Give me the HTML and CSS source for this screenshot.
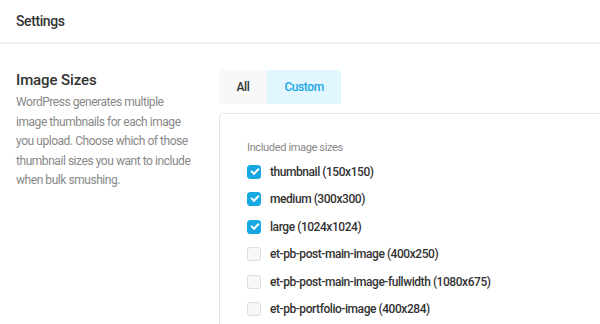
FILE: index.html
```html
<!DOCTYPE html>
<html lang="en">
<head>
    <meta charset="UTF-8">
    <meta name="viewport" content="width=device-width, initial-scale=1.0">
    <title>Settings</title>
    <link rel="stylesheet" href="styles.css">
</head>
<body>
    <header class="page-header">
        <h1>Settings</h1>
    </header>

    <section class="settings-row">
        <div class="settings-label">
            <h2>Image Sizes</h2>
            <p>WordPress generates multiple image thumbnails for each image you upload. Choose which of those thumbnail sizes you want to include when bulk smushing.</p>
        </div>
        <div class="settings-field">
            <div class="tabs">
                <span class="tab">All</span>
                <span class="tab active">Custom</span>
            </div>
            <div class="tab-content">
                <p class="field-label">Included image sizes</p>
                <ul class="size-list">
                    <li><span class="check checked"></span>thumbnail (150x150)</li>
                    <li><span class="check checked"></span>medium (300x300)</li>
                    <li><span class="check checked"></span>large (1024x1024)</li>
                    <li><span class="check"></span>et-pb-post-main-image (400x250)</li>
                    <li><span class="check"></span>et-pb-post-main-image-fullwidth (1080x675)</li>
                    <li><span class="check"></span>et-pb-portfolio-image (400x284)</li>
                </ul>
            </div>
        </div>
    </section>
</body>
</html>
```

FILE: styles.css
```css
/* Global */
body {
    font-family: Roboto, "Liberation Sans", sans-serif;
    margin: 0;
    background: #ffffff;
    color: #333333;
    overflow: hidden;
    height: 324px;
}

/* Header */
.page-header {
    height: 42px;
    padding: 0 16px;
    display: flex;
    align-items: center;
    border-bottom: 2px solid #eeeeee;
}

.page-header h1 {
    margin: 0;
    font-size: 14px;
    font-weight: 500;
    letter-spacing: -0.4px;
}

/* Settings row */
.settings-row {
    display: grid;
    grid-template-columns: 203px 1fr;
    padding: 26px 0 0 16px;
}

.settings-label h2 {
    margin: 0 0 3px;
    font-size: 15px;
    font-weight: 500;
    line-height: 20px;
    letter-spacing: -0.1px;
}

.settings-label p {
    margin: 0;
    width: 176px;
    font-size: 12px;
    line-height: 19.5px;
    letter-spacing: -0.45px;
    color: #888888;
}

/* Tabs */
.tabs {
    display: flex;
}

.tab {
    height: 34px;
    padding: 0 17.5px;
    display: flex;
    align-items: center;
    background: #f8f8f8;
    font-size: 12px;
    font-weight: 500;
    letter-spacing: -0.4px;
    color: #333333;
    border-radius: 4px 0 0 0;
}

.tab.active {
    background: #e1f6ff;
    color: #17a8e3;
    border-radius: 0 4px 0 0;
}

.tab-content {
    margin-top: 9px;
    margin-right: -20px;
    border: 1px solid #e6e6e6;
    border-radius: 4px 0 0 0;
    padding: 25px 0 0 27px;
    height: 300px;
}

.field-label {
    margin: 0 0 1px;
    font-size: 11px;
    line-height: 18px;
    letter-spacing: -0.35px;
    color: #888888;
}

.size-list {
    list-style: none;
    margin: 0;
    padding: 0;
}

.size-list li {
    height: 27.5px;
    display: flex;
    align-items: center;
    font-size: 12px;
    font-weight: 500;
    letter-spacing: -0.45px;
    color: #333333;
}

.check {
    width: 12px;
    height: 12px;
    margin-right: 9px;
    border: 1px solid #dddddd;
    border-radius: 3px;
    background: #f8f8f8;
    position: relative;
}

.check.checked {
    background: #17a8e3;
    border-color: #17a8e3;
}

.check.checked::after {
    content: "";
    position: absolute;
    left: 3px;
    top: 2px;
    width: 6px;
    height: 3px;
    border-left: 2px solid #ffffff;
    border-bottom: 2px solid #ffffff;
    transform: rotate(-45deg);
}
```
